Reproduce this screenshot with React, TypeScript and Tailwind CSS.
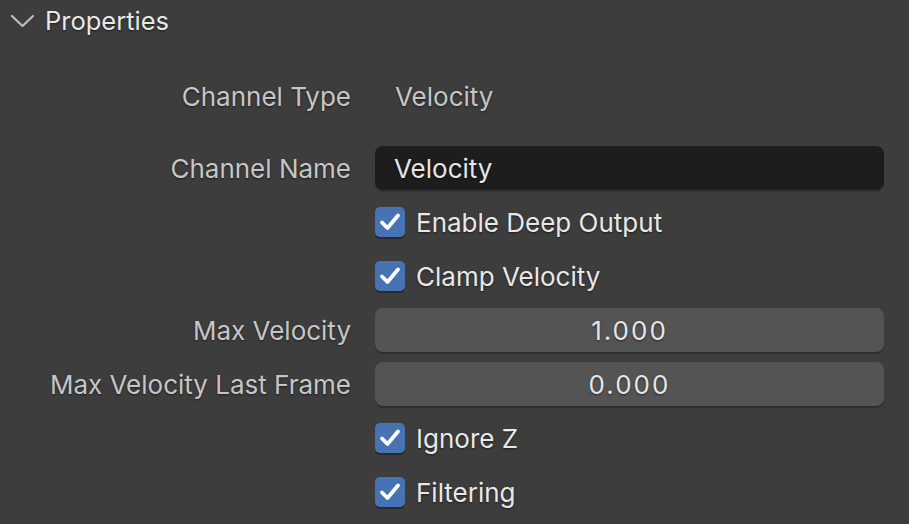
import React from "react";

const font = { fontFamily: "Inter, 'Noto Sans', sans-serif" };
const shadowText = "[text-shadow:0_1px_2px_rgba(0,0,0,0.55)]";

const Label = ({ text }: { text?: string }) => (
  <div className={`w-[351px] shrink-0 text-right text-[26px] text-[#c6c6c6] ${shadowText}`}>
    {text}
  </div>
);

const Check = ({ label }: { label: string }) => (
  <div className="flex h-[54px] items-center">
    <Label />
    <div className="ml-[24px] flex items-center">
      <div className="flex h-[30px] w-[30px] items-center justify-center rounded-[5px] bg-[#4772b3] shadow-[0_2px_0_#2a2a2a]">
        <svg width="24" height="24" viewBox="0 0 24 24" fill="none">
          <path d="M4 12.5 L9.5 18 L20 5.5" stroke="white" strokeWidth="3.8" strokeLinecap="round" strokeLinejoin="round" />
        </svg>
      </div>
      <span className={`ml-[11px] text-[26px] text-[#e8e8e8] ${shadowText}`}>{label}</span>
    </div>
  </div>
);

const NumField = ({ label, value }: { label: string; value: string }) => (
  <div className="flex h-[54px] items-center">
    <Label text={label} />
    <div className={`ml-[24px] flex h-[44px] w-[509px] items-center justify-center rounded-[8px] bg-[#545454] text-[26px] tracking-[2px] text-[#e6e6e6] shadow-[0_2px_0_#2e2e2e] ${shadowText}`}>
      {value}
    </div>
  </div>
);

export default function App() {
  return (
    <div className="h-[524px] w-[909px] overflow-hidden bg-[#3d3d3d]" style={font}>
      {/* Panel header */}
      <div className="flex h-[42px] items-center">
        <svg className="ml-[10px]" width="25" height="16" viewBox="0 0 25 16" fill="none">
          <path d="M2 3 L12.5 13 L23 3" stroke="#bdbdbd" strokeWidth="2.2" strokeLinecap="round" strokeLinejoin="round" />
        </svg>
        <span className={`ml-[10px] text-[25.5px] text-[#e8e8e8] ${shadowText}`}>Properties</span>
      </div>

      <div className="mt-[27px] flex h-[54px] items-center">
        <Label text="Channel Type" />
        <span className={`ml-[44px] text-[26px] text-[#c6c6c6] ${shadowText}`}>Velocity</span>
      </div>

      <div className="mt-[18px] flex h-[54px] items-center">
        <Label text="Channel Name" />
        <div className={`ml-[24px] flex h-[44px] w-[509px] items-center rounded-[8px] bg-[#1d1d1d] pl-[19px] text-[26px] text-[#e6e6e6] shadow-[0_2px_0_#333] ${shadowText}`}>
          Velocity
        </div>
      </div>

      <Check label="Enable Deep Output" />
      <Check label="Clamp Velocity" />
      <NumField label="Max Velocity" value="1.000" />
      <NumField label="Max Velocity Last Frame" value="0.000" />
      <Check label="Ignore Z" />
      <Check label="Filtering" />
    </div>
  );
}
